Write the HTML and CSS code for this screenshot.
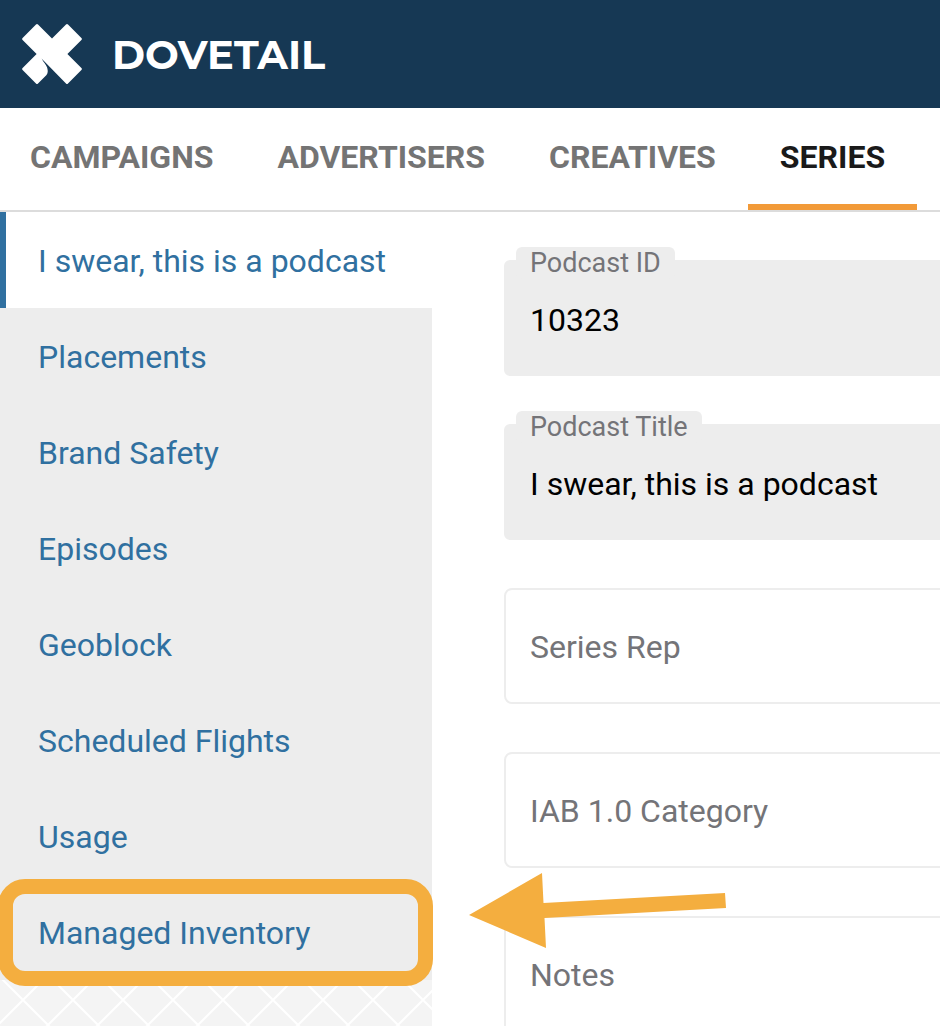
FILE: index.html
```
<!DOCTYPE html>
<html lang="en">
<head>
    <meta charset="UTF-8">
    <meta name="viewport" content="width=device-width, initial-scale=1.0">
    <title>Dovetail - Series</title>
    <link rel="stylesheet" href="styles.css">
</head>
<body>
    <header class="header">
        <a class="brand" href="#">
            <svg class="brand-logo" viewBox="0 0 60 60" aria-hidden="true">
                <path d="M14 .6Q15 -.4 16 .6L30 14.600L44 .6Q45 -.4 46 .6L59.400 14Q60.400 15 59.400 16L45.400 30L59.400 44Q60.400 45 59.400 46L46 59.400Q45 60.400 44 59.400L19.500 34.500C22 39 25.700 42 25.700 46.500Q26 49 24.500 51L16 59.400Q15 60.400 14 59.400L.6 46Q-.4 45 .6 44L14.600 30L.6 16Q-.4 15 .6 14Z"/>
            </svg>
            <span class="brand-name">DOVETAIL</span>
        </a>
    </header>

    <nav class="tabs">
        <a class="tab" href="#">CAMPAIGNS</a>
        <a class="tab" href="#">ADVERTISERS</a>
        <a class="tab" href="#">CREATIVES</a>
        <a class="tab active" href="#" aria-current="page">SERIES</a>
    </nav>

    <div class="layout">
        <aside class="sidebar">
            <ul class="menu">
                <li><a class="menu-item active" href="#">I swear, this is a podcast</a></li>
                <li><a class="menu-item" href="#">Placements</a></li>
                <li><a class="menu-item" href="#">Brand Safety</a></li>
                <li><a class="menu-item" href="#">Episodes</a></li>
                <li><a class="menu-item" href="#">Geoblock</a></li>
                <li><a class="menu-item" href="#">Scheduled Flights</a></li>
                <li><a class="menu-item" href="#">Usage</a></li>
                <li class="highlighted">
                    <a class="menu-item" href="#">Managed Inventory</a>
                    <svg class="arrow" viewBox="0 0 258 76" aria-hidden="true">
                        <path d="M0 42L73 0L74.500 30L256 20L257 35L75.500 45L77 75Z"/>
                    </svg>
                </li>
            </ul>
            <svg class="lattice" aria-hidden="true">
                <defs>
                    <pattern id="lattice" width="50" height="50" patternUnits="userSpaceOnUse" x="-2" y="-5">
                        <path class="lattice-line" d="M-2 -2L52 52M-2 52L52 -2"/>
                    </pattern>
                </defs>
                <rect width="100%" height="100%" fill="url(#lattice)"/>
            </svg>
        </aside>

        <main class="content">
            <form class="form">
                <div class="field filled">
                    <label for="podcast-id">Podcast ID</label>
                    <input id="podcast-id" type="text" value="10323" readonly>
                </div>
                <div class="field filled">
                    <label for="podcast-title">Podcast Title</label>
                    <input id="podcast-title" type="text" value="I swear, this is a podcast" readonly>
                </div>
                <div class="field">
                    <label for="series-rep">Series Rep</label>
                    <input id="series-rep" type="text">
                </div>
                <div class="field">
                    <label for="iab-category">IAB 1.0 Category</label>
                    <input id="iab-category" type="text">
                </div>
                <div class="field">
                    <label for="notes">Notes</label>
                    <textarea id="notes" rows="5"></textarea>
                </div>
            </form>
        </main>
    </div>
</body>
</html>
```
FILE: styles.css
```
* {
    margin: 0;
    padding: 0;
    box-sizing: border-box;
}

body {
    font-family: Roboto, "Liberation Sans", sans-serif;
    font-size: 32px;
    line-height: 40px;
    background: #fff;
    color: #000;
    height: 100vh;
    display: flex;
    flex-direction: column;
    overflow: hidden;
}

a {
    color: inherit;
    text-decoration: none;
}

.header {
    flex: none;
    background: #163854;
    padding: 24px 22px;
}

.brand {
    display: flex;
    align-items: center;
    gap: 30px;
    color: #fff;
}

.brand-logo {
    width: 60px;
    height: 60px;
    fill: currentColor;
}

.brand-name {
    padding-top: 2px;
    font-family: Montserrat, Inter, sans-serif;
    font-size: 40px;
    font-weight: 700;
}

/* Top navigation */
.tabs {
    flex: none;
    display: flex;
    border-bottom: 2px solid #dcdcdc;
}

.tab {
    padding: 29px 32px 27px;
    border-bottom: 6px solid transparent;
    color: #747474;
    font-weight: 700;
}

.tab:first-child {
    padding-left: 30px;
}

.tab.active {
    color: #1a1a1a;
    border-bottom-color: #f29a38;
}

.layout {
    flex: 1;
    min-height: 0;
    display: flex;
}

/* Sidebar */
.sidebar {
    flex: none;
    width: 432px;
    display: flex;
    flex-direction: column;
    background: #f4f4f4;
}

.menu {
    list-style: none;
    background: #ededed;
}

.menu-item {
    display: block;
    padding: 29px 32px 27px;
    border-left: 6px solid transparent;
    color: #3070a0;
}

.menu-item.active {
    background: #fff;
    border-left-color: #3070a0;
}

.lattice {
    flex: 1;
    width: 100%;
    min-height: 0;
}

.lattice-line {
    stroke: #fff;
    stroke-width: 2;
}

/* Callout drawn around the menu item */
.highlighted {
    position: relative;
    z-index: 1;
}

.highlighted::after {
    content: "";
    position: absolute;
    inset: -5px -1px -6px -2px;
    border: 15px solid #f4ae3f;
    border-radius: 27px;
    pointer-events: none;
}

.arrow {
    position: absolute;
    left: 469px;
    top: -11px;
    width: 258px;
    height: 76px;
    fill: #f4ae3f;
    pointer-events: none;
}

/* Form */
.content {
    flex: 1;
    min-width: 0;
    padding: 48px 0 0 72px;
}

.form {
    min-width: 600px;
    display: flex;
    flex-direction: column;
    gap: 48px;
}

.field {
    position: relative;
}

.field label {
    position: absolute;
    left: 26px;
    top: 39px;
    color: #747478;
}

.field input,
.field textarea {
    display: block;
    width: 100%;
    height: 116px;
    padding: 4px 24px 0;
    border: 2px solid #ededed;
    border-radius: 8px;
    background: transparent;
    font: inherit;
    color: inherit;
    outline: none;
    resize: none;
}

.field textarea {
    height: 220px;
}

.field.filled input {
    background: #ededed;
    border-radius: 6px;
}

.field.filled label {
    left: 12px;
    top: -13px;
    padding: 0 14px;
    border-radius: 6px;
    background: #ededed;
    font-size: 27px;
    line-height: 32px;
}
```
